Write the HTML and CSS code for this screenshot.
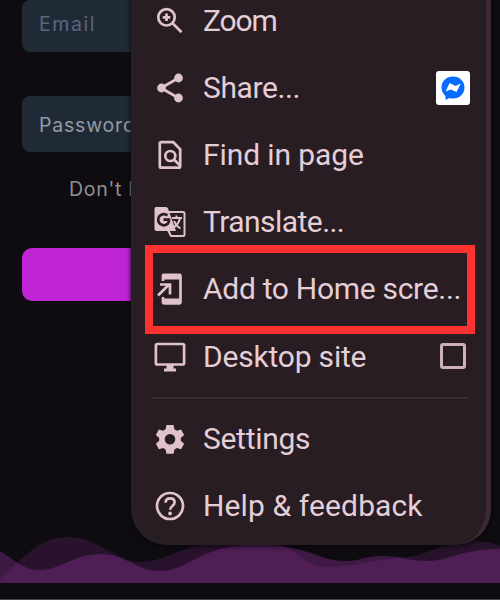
FILE: index.html
```
<!DOCTYPE html>
<html lang="en">
<head>
<meta charset="utf-8">
<title>Browser menu</title>
<link rel="stylesheet" href="styles.css">
</head>
<body>
<main class="page">
  <form class="login">
    <div class="field email"><span>Email</span></div>
    <div class="field password"><span>Password</span></div>
    <p class="signup">Don't have an account?</p>
    <div class="submit"></div>
  </form>
  <svg class="waves" viewBox="0 0 500 50" width="500" height="50">
    <path class="wave-back" d="M0 46C22 25 40 4 68 4C99 4 115 29 140 29C165 29 185 11 220 9L275 11C298 15 305 34 325 34C351 34 375 27 405 24C431 22 443 8 472 8Q488 8 500 13V50H0Z"/>
    <path class="wave-front" d="M0 18C15 27 23 37 40 37C61 37 72 21 101 21C127 21 135 38 160 38C187 38 203 12 250 12C305 10 317 28 345 28C361 28 365 23 382 23C401 23 409 28 427 28C449 28 460 16 500 16V50H0Z"/>
  </svg>
</main>
<nav class="menu">
  <div class="item">
    <svg class="icon" viewBox="0 0 32 32"><g class="line"><circle cx="12.500" cy="12.300" r="8.200"/><path d="m18.500 18.300 9 9M12.500 8.500v7.600M8.700 12.300h7.600"/></g></svg>
    <span class="label zoom">Zoom</span>
  </div>
  <div class="item">
    <svg class="icon" viewBox="0 0 32 32"><path class="line" d="M24.500 6 7 16l17.500 10"/><circle cx="24.500" cy="6" r="4.400"/><circle cx="7.500" cy="16" r="4.400"/><circle cx="24.500" cy="26" r="4.400"/></svg>
    <span class="label share">Share...</span>
    <span class="messenger"><svg viewBox="0 0 24 24" width="24" height="24"><path class="bubble" d="M12 .5C5.400.5.500 5.200.500 11.500c0 3.600 1.500 6.500 4 8.500v4l3.800-2c1.100.4 2.400.5 3.700.5 6.600 0 11.500-4.700 11.500-11S18.600.5 12 .5Z"/><path class="bolt" d="m4.600 15.500 4-8.500 6 3L19.800 7.500 15.500 16 9.800 13.500Z"/></svg></span>
  </div>
  <div class="item">
    <svg class="icon" viewBox="0 0 32 32"><g class="line"><path d="M7.300 3.200h12l6.900 7v17q0 1.500-1.500 1.500H7.300q-1.500 0-1.500-1.500V4.700q0-1.500 1.500-1.500Z"/><circle cx="16.300" cy="17" r="5"/><path d="m20 20.500 6 6"/></g></svg>
    <span class="label find">Find in page</span>
  </div>
  <div class="item">
    <svg class="icon" viewBox="0 0 32 32"><path class="line thin" d="M14 6h15q1.500 0 1.500 1.500v21q0 1.500-1.500 1.500H17l-3-6"/><path d="M2 1h10q1.500 0 2 1.500L22 25H2.500Q.5 25 .5 23V2.500Q.5 1 2 1Z"/><path class="cut" d="M13.500 9.500a5.600 5.600 0 1 0 .4 8q1.300-1.500 1.100-3.800H9.500"/><path class="line thin" d="M18 12h10M22.500 9.500V12M26 12q-1 6-7 10M20 15q2 5 6.500 7.500"/></svg>
    <span class="label translate">Translate...</span>
  </div>
  <div class="item">
    <svg class="icon" viewBox="0 0 32 32"><path class="line" d="M9 8V2.500Q9 1.800 10 1.800h15.500q1 0 1 1v26.500q0 1-1 1H10q-1 0-1-1V24"/><path d="M9 1.500h17.500v5H9ZM9 25.500h17.500v5H9Z"/><path class="line" d="m4 22.500 11-11M6 11.500h10v10"/></svg>
    <span class="label home">Add to Home scre...</span>
    <i class="highlight"></i>
  </div>
  <div class="item">
    <svg class="icon" viewBox="0 0 32 32"><rect class="line" x="1.900" y="3" width="28.200" height="20.500" rx="1.500"/><path d="M12.500 23.500h7v4H22v3H10v-3h2.500Z"/></svg>
    <span class="label desktop">Desktop site</span>
    <span class="checkbox"></span>
  </div>
  <hr class="divider">
  <div class="item">
    <svg class="icon" viewBox="0 0 32 32"><path fill-rule="evenodd" d="M12.500 2h7l.9 4.300 2.500 1.500 4.200-1.400 3 5.500-3.300 3v2.900l3.300 3-3 5.500-4.200-1.400-2.500 1.500-.9 4.300h-7l-.9-4.300-2.500-1.500-4.200 1.400-3-5.500 3.300-3v-2.900l-3.300-3 3-5.500 4.200 1.400 2.500-1.500ZM16 11a5.300 5.300 0 1 0 0 10.600 5.300 5.300 0 0 0 0-10.600Z"/></svg>
    <span class="label settings">Settings</span>
  </div>
  <div class="item">
    <svg class="icon" viewBox="0 0 32 32"><circle class="line" cx="16" cy="16" r="13"/><path class="line" d="M11.500 12.800q.2-4.500 4.600-4.500 4.500 0 4.500 4 0 2-2.200 3.700-2.200 1.700-2.200 3.700"/><circle cx="16.100" cy="23.500" r="1.900"/></svg>
    <span class="label help">Help &amp; feedback</span>
  </div>
</nav>
</body>
</html>
```
FILE: styles.css
```
* { box-sizing: border-box; }
body {
  margin: 0;
  width: 500px;
  height: 600px;
  overflow: hidden;
  background: #0e0b11;
  font-family: Roboto, sans-serif;
  display: grid;
}
.page {
  grid-area: 1 / 1;
  height: 600px;
  overflow: hidden;
  display: flex;
  flex-direction: column;
  border-bottom: 1px solid #49474c;
}
.login {
  width: 455px;
  height: 533px;
  margin-left: 22px;
  font: 400 19.5px/56px "Inter", sans-serif;
  letter-spacing: 1.1px;
}
.field {
  height: 56px;
  padding-left: 17px;
  border-radius: 8px;
  background: #202a37;
}
.email { height: 52px; line-height: 48px; letter-spacing: 1.6px; color: #5b677a; }
.password { margin-top: 44px; color: #949aa3; line-height: 58px; letter-spacing: .8px; }
.signup {
  margin: 22px 0 0 47px;
  line-height: 31px;
  height: 30px;
  letter-spacing: .7px;
  color: #939095;
}
.submit {
  height: 53px;
  margin-top: 44px;
  border-radius: 10px;
  background: #bf25d4;
}
.waves { display: block; }
.wave-back { fill: rgba(153, 51, 165, .19); }
.wave-front { fill: rgba(145, 51, 157, .37); }
.menu {
  grid-area: 1 / 1;
  z-index: 1;
  width: 360px;
  height: 558px;
  margin: -13px 0 0 131px;
  padding: 0 21px;
  border-right: 5px solid #3a2a31;
  border-radius: 0 0 36px 36px;
  background: #281d22;
  box-shadow: 0 1px 5px #09070b;
}
.item {
  position: relative;
  display: flex;
  align-items: center;
  height: 67.200px;
  width: 318px;
}
.icon {
  width: 32px;
  height: 32px;
  margin: 0 17.5px 0 1.5px;
  flex: none;
  fill: #e0c1ce;
}
.line {
  fill: none;
  stroke: #e0c1ce;
  stroke-width: 2.700;
}
.thin { stroke-width: 2; }
.cut { fill: none; stroke: #281d22; stroke-width: 2.700; }
.label {
  color: #e4ced7;
  font-size: 30px;
  line-height: 36px;
  white-space: nowrap;
}
.zoom { letter-spacing: -1.100px; }
.share { letter-spacing: -.4px; }
.find { letter-spacing: -.1px; }
.translate { letter-spacing: -.55px; }
.home { letter-spacing: -.3px; }
.desktop { letter-spacing: -.2px; }
.settings { letter-spacing: -.3px; }
.help { letter-spacing: .12px; }
.messenger {
  display: grid;
  place-items: center;
  width: 34px;
  height: 34px;
  margin-left: auto;
  border-radius: 3px;
  background: #fff;
}
.bubble { fill: #086bff; }
.bolt { fill: #fff; }
.checkbox {
  width: 26px;
  height: 26px;
  margin: -2px 4px 0 auto;
  border: 3px solid #cdb0bc;
  border-radius: 3px;
}
.highlight {
  position: absolute;
  left: -7px;
  top: -10.500px;
  width: 330px;
  height: 89px;
  border: 8px solid #ff3232;
}
.divider {
  width: 317px;
  height: 2px;
  margin: 7px 0 6px;
  border: 0;
  background: #3a2b32;
}
```
